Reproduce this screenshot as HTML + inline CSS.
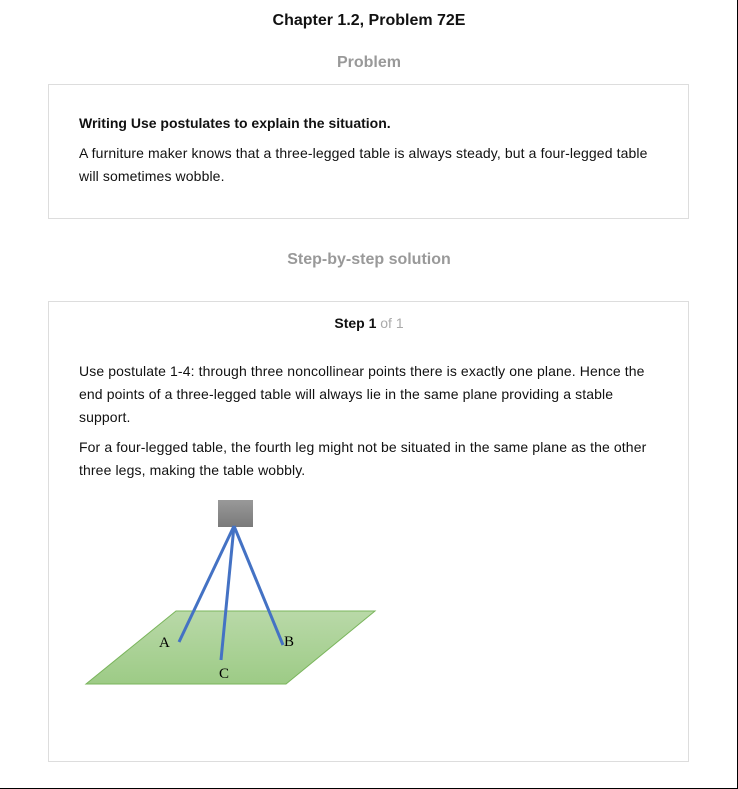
<!DOCTYPE html>
<html><head><meta charset="utf-8"><style>
html,body{margin:0;padding:0;background:#fff;}
body{width:738px;height:789px;position:relative;overflow:hidden;font-family:"Liberation Sans",Arial,sans-serif;color:#111;}
.frame{position:absolute;left:0;top:0;width:737px;height:788px;border-right:1px solid #000;border-bottom:1px solid #000;box-sizing:content-box;}
.t{position:absolute;white-space:nowrap;}
.box{position:absolute;left:48px;width:639px;border:1px solid #ddd;}
p{margin:0;}
.txt{position:absolute;left:79px;font-size:14px;line-height:23px;letter-spacing:0.11px;white-space:nowrap;}
</style></head><body>
<div class="frame"></div>
<div class="t" style="left:0;width:738px;text-align:center;top:12px;font-size:16px;font-weight:bold;">Chapter 1.2, Problem 72E</div>
<div class="t" style="left:0;width:738px;text-align:center;top:54px;font-size:16px;font-weight:bold;color:#999;">Problem</div>
<div class="box" style="top:84px;height:133px;"></div>
<div class="txt" style="top:112px;font-weight:bold;letter-spacing:0;">Writing Use postulates to explain the situation.</div>
<div class="txt" style="top:142px;">A furniture maker knows that a three-legged table is always steady, but a four-legged table<br>will sometimes wobble.</div>
<div class="t" style="left:0;width:738px;text-align:center;top:251px;font-size:16px;font-weight:bold;color:#999;">Step-by-step solution</div>
<div class="box" style="top:301px;height:459px;"></div>
<div class="t" style="left:0;width:738px;text-align:center;top:315px;font-size:14px;"><b>Step 1</b> <span style="color:#aaa">of 1</span></div>
<div class="txt" style="top:360px;">Use postulate 1-4: through three noncollinear points there is exactly one plane. Hence the<br>end points of a three-legged table will always lie in the same plane providing a stable<br>support.</div>
<div class="txt" style="top:436px;">For a four-legged table, the fourth leg might not be situated in the same plane as the other<br>three legs, making the table wobbly.</div>
<svg style="position:absolute;left:0;top:0" width="738" height="789">
<defs><linearGradient id="g" x1="0" y1="0" x2="0" y2="1"><stop offset="0" stop-color="#b9d9a8"/><stop offset="1" stop-color="#9dcb86"/></linearGradient>
<linearGradient id="s" x1="0" y1="0" x2="0" y2="1"><stop offset="0" stop-color="#999"/><stop offset="1" stop-color="#7a7a7a"/></linearGradient></defs>
<polygon points="176,611 375,611 286,684 86,684" fill="url(#g)" stroke="#7ab55c" stroke-width="1"/>
<rect x="218" y="500" width="35" height="27" fill="url(#s)"/>
<g stroke="#4472c4" stroke-width="3" stroke-linecap="butt">
<line x1="234" y1="526" x2="179" y2="642"/>
<line x1="234" y1="526" x2="221" y2="660"/>
<line x1="234" y1="526" x2="283" y2="645"/>
</g>
<g font-family="Liberation Serif,serif" font-size="15" fill="#000">
<text x="159" y="647">A</text><text x="284" y="646">B</text><text x="219" y="678">C</text>
</g>
</svg>
</body></html>
